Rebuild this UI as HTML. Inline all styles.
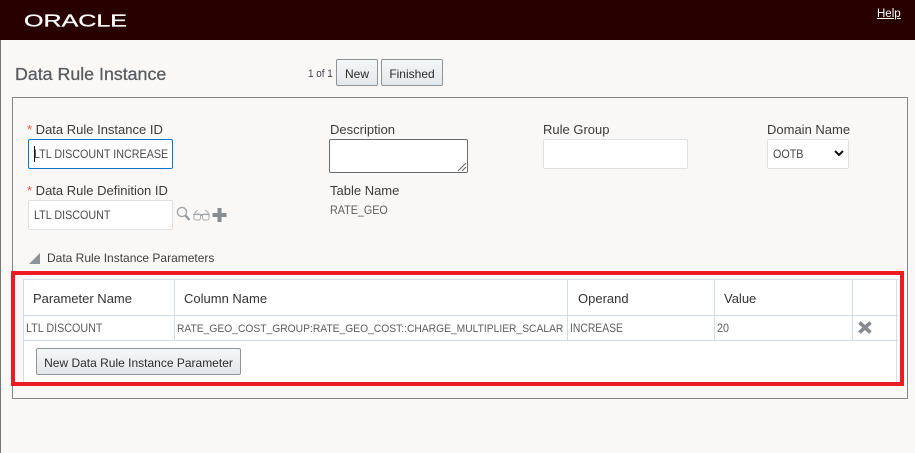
<!DOCTYPE html>
<html lang="en"><head><meta charset="utf-8"><title>Data Rule Instance</title>
<style>
html,body{margin:0;padding:0;width:915px;height:453px;overflow:hidden;background:#f9f8f6;}
body{position:relative;font-family:"Liberation Sans",sans-serif;}
.a{position:absolute;white-space:nowrap;}
.t{position:absolute;white-space:nowrap;line-height:16px;}
.lab{font-size:13px;color:#3b3b3b;}
.val{font-size:11.5px;color:#5c5c5c;transform:scaleX(.935);transform-origin:0 0;}
.hd{font-size:13px;color:#333;}
.box{position:absolute;box-sizing:border-box;background:#fff;border:1px solid #dfdfdf;border-radius:2px;}
.btn{position:absolute;box-sizing:border-box;background:linear-gradient(#f5f6f7,#e4e7ea);border:1px solid #8f9498;border-radius:2px;color:#2c2c2c;font-size:12px;text-align:center;white-space:nowrap;line-height:28px;}
.ln{position:absolute;background:#d2dde7;}
.star{color:#f0504a;}
</style></head><body>
<div class="a" style="left:0;top:0;width:1px;height:453px;background:#777;"></div>
<div class="a" style="left:0;top:0;width:915px;height:40px;background:#290000;"></div>
<svg class="a" style="left:20px;top:8px;" width="115" height="26"><text x="4" y="18.500" font-family="Liberation Sans" font-size="17.500" fill="#fff" stroke="#fff" stroke-width=".3" textLength="103" lengthAdjust="spacingAndGlyphs">ORACLE</text></svg>
<span class="t" style="left:877px;top:6px;font-size:11.500px;color:#fff;text-decoration:underline;">Help</span>

<span class="t" style="left:15px;top:65px;font-size:17.800px;color:#5a5d60;line-height:18px;-webkit-text-stroke:.3px #5a5d60;">Data Rule Instance</span>
<span class="t" style="left:308px;top:66px;font-size:11px;color:#4a4250;transform:scaleX(.9);transform-origin:0 0;">1 of 1</span>
<div class="btn" style="left:336px;top:59px;width:42px;height:27px;">New</div>
<div class="btn" style="left:381px;top:59px;width:62px;height:27px;">Finished</div>

<div class="a" style="left:12px;top:97px;width:896px;height:302px;border:1px solid #848484;box-sizing:border-box;"></div>

<span class="t lab" style="left:27px;top:122px;"><span class="star">*</span> Data Rule Instance ID</span>
<div class="box" style="left:28px;top:139px;width:145px;height:30px;border:1px solid #0f73c8;"></div>
<div class="a" style="left:34px;top:146px;width:1px;height:16px;background:#111;"></div>
<span class="t val" style="left:34px;top:147px;color:#4a4a4a;">LTL DISCOUNT INCREASE</span>

<span class="t lab" style="left:27px;top:183px;"><span class="star">*</span> Data Rule Definition ID</span>
<div class="box" style="left:28px;top:200px;width:145px;height:30px;"></div>
<span class="t val" style="left:34px;top:208px;color:#4a4a4a;">LTL DISCOUNT</span>
<svg class="a" style="left:175px;top:205px;" width="56" height="20">
<circle cx="7" cy="7" r="4.600" fill="none" stroke="#a3a7aa" stroke-width="1.400"/><path d="M10.500 10.500L14.500 15" stroke="#94989b" stroke-width="2.200"/>
<g fill="none" stroke="#a8abae" stroke-width="1"><rect x="19" y="9" width="6.500" height="6" rx="2"/><rect x="27.500" y="9" width="6.500" height="6" rx="2"/><path d="M25.500 10.500h2M18 9.500h17M19.500 9Q20 6 23 5.500M33.500 9Q33 6 30 5.500"/></g>
<path d="M37.500 8h5V3h4v5h5v4h-5v5h-4v-5h-5z" fill="#878c90"/>
</svg>

<span class="t lab" style="left:330px;top:122px;">Description</span>
<div class="box" style="left:329px;top:139px;width:139px;height:34px;border:1px solid #6b6b6b;"></div>
<svg class="a" style="left:457px;top:162px;" width="10" height="10"><path d="M1 9L9 1M5 9L9 5" stroke="#666" stroke-width="1"/></svg>
<span class="t lab" style="left:330px;top:183px;">Table Name</span>
<span class="t val" style="left:330px;top:203px;">RATE_GEO</span>

<span class="t lab" style="left:543px;top:122px;">Rule Group</span>
<div class="box" style="left:543px;top:139px;width:145px;height:30px;"></div>

<span class="t lab" style="left:767px;top:122px;">Domain Name</span>
<div class="box" style="left:767px;top:139px;width:82px;height:30px;"></div>
<span class="t val" style="left:773px;top:147px;color:#444;">OOTB</span>
<svg class="a" style="left:833px;top:149px;" width="12" height="9"><path d="M2 2l4 4 4-4" fill="none" stroke="#111" stroke-width="2"/></svg>

<svg class="a" style="left:29px;top:252px;" width="12" height="12"><path d="M11 1V12H0z" fill="#8f9498"/></svg>
<span class="t" style="left:47px;top:250px;font-size:12px;color:#404040;">Data Rule Instance Parameters</span>

<div class="a" style="left:23px;top:279px;width:875px;height:103px;background:#fff;"></div>
<div class="ln" style="left:23px;top:279px;width:875px;height:1px;"></div>
<div class="ln" style="left:23px;top:315px;width:875px;height:1px;"></div>
<div class="ln" style="left:23px;top:340px;width:875px;height:1px;"></div>
<div class="ln" style="left:23px;top:279px;width:1px;height:103px;"></div>
<div class="ln" style="left:174px;top:279px;width:1px;height:62px;"></div>
<div class="ln" style="left:567px;top:279px;width:1px;height:62px;"></div>
<div class="ln" style="left:714px;top:279px;width:1px;height:62px;"></div>
<div class="ln" style="left:852px;top:279px;width:1px;height:62px;"></div>
<div class="ln" style="left:896px;top:279px;width:1px;height:103px;"></div>

<span class="t hd" style="left:33px;top:291px;">Parameter Name</span>
<span class="t hd" style="left:184px;top:291px;">Column Name</span>
<span class="t hd" style="left:578px;top:291px;">Operand</span>
<span class="t hd" style="left:724px;top:291px;">Value</span>

<span class="t val" style="left:26px;top:321px;">LTL DISCOUNT</span>
<span class="t val" style="left:177px;top:321px;font-size:11px;">RATE_GEO_COST_GROUP:RATE_GEO_COST::CHARGE_MULTIPLIER_SCALAR</span>
<span class="t val" style="left:570px;top:321px;transform:scaleX(.9);">INCREASE</span>
<span class="t val" style="left:717px;top:321px;">20</span>
<svg class="a" style="left:857px;top:320px;" width="16" height="15"><path d="M2.500 2.500L13.500 12.500M13.500 2.500L2.500 12.500" stroke="#868b8f" stroke-width="3.600"/></svg>

<div class="btn" style="left:36px;top:348px;width:205px;height:27px;">New Data Rule Instance Parameter</div>

<div class="a" style="left:11px;top:271px;border:4px solid #ed1c24;box-sizing:content-box;width:885px;height:107px;"></div>
</body></html>
